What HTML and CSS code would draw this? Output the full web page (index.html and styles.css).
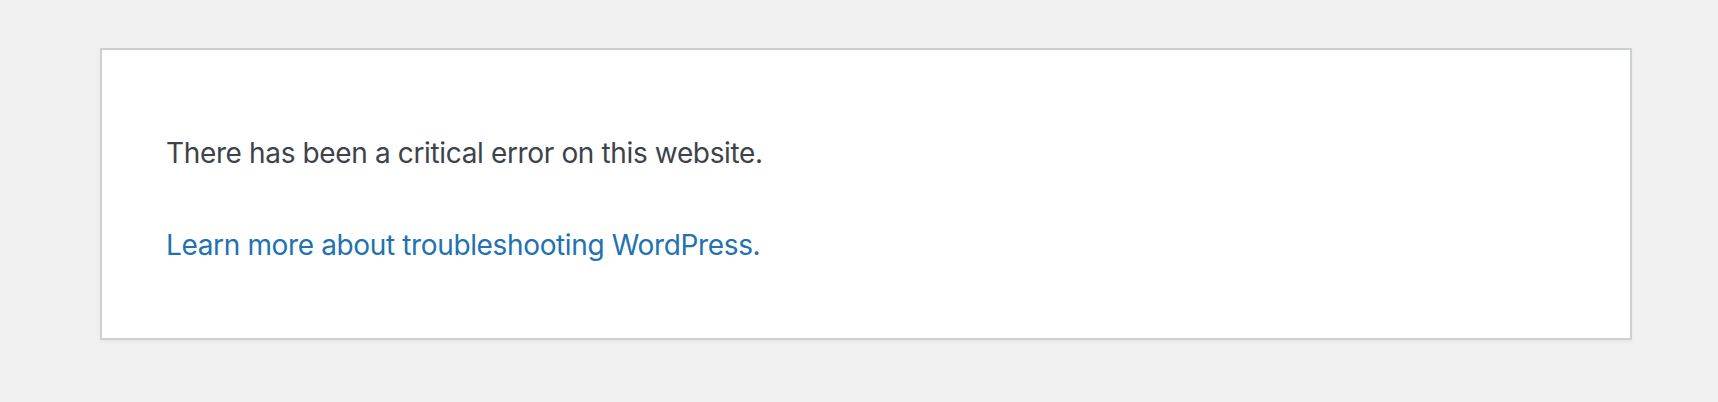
FILE: index.html
```html
<!DOCTYPE html>
<html lang="en">
<head>
<meta charset="utf-8">
<title>WordPress › Error</title>
<link rel="stylesheet" href="styles.css">
</head>
<body class="page">
<div class="error-page">
<p class="message">There has been a critical error on this website.</p>
<p class="message"><a class="link" href="#">Learn more about troubleshooting WordPress.</a></p>
</div>
</body>
</html>
```
FILE: styles.css
```css
html {
  background: #f0f0f1;
}
.page {
  margin: 0;
  padding: 48px 86px 40px 100px;
  font-family: Inter, "Liberation Sans", sans-serif;
}
.error-page {
  background: #fff;
  border: 2px solid #ccd0d4;
  box-shadow: 0 2px 2px rgba(0, 0, 0, 0.04);
  color: #3c434a;
  padding: 32px 64px;
}
.message {
  font-size: 28px;
  line-height: 42px;
  letter-spacing: -0.36px;
  margin: 50px 0 40px;
}
.link {
  color: #2271b1;
  text-decoration: none;
}
```
